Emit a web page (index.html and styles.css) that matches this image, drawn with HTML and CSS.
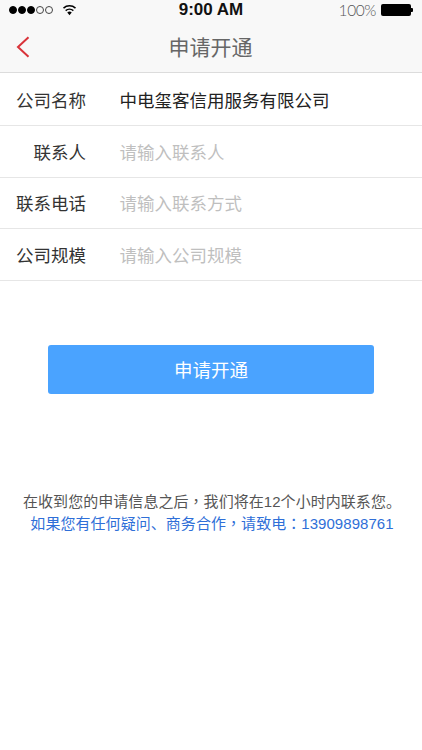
FILE: index.html
```html
<!DOCTYPE html>
<html lang="zh-CN">
<head>
<meta charset="utf-8">
<title>申请开通</title>
<link rel="stylesheet" href="styles.css">
</head>
<body>
<div class="top">
  <div class="status">
    <div class="status-left">
      <span class="dots"><i class="dot"></i><i class="dot"></i><i class="dot"></i><i class="dot off"></i><i class="dot off"></i></span>
      <svg class="wifi" width="15" height="12" viewBox="0 0 16 12"><path d="M8 11.5 5.6 8.6a3.7 3.7 0 0 1 4.8 0z" fill="#000"/><path d="M3.9 6.7a6.2 6.2 0 0 1 8.2 0M1.6 4a9.6 9.6 0 0 1 12.8 0" fill="none" stroke="#000" stroke-width="1.6"/></svg>
    </div>
    <div class="clock">9:00 AM</div>
    <div class="status-right">
      <span class="pct">100%</span>
      <span class="battery"><i class="cap"></i></span>
    </div>
  </div>
  <header class="nav">
    <svg class="back" width="14" height="22" viewBox="0 0 14 22"><path d="M12.5 1.2 2 11l10.5 9.8" fill="none" stroke="#d9333a" stroke-width="2"/></svg>
    <h1 class="title">申请开通</h1>
  </header>
</div>
<main class="form">
  <div class="row"><span class="label">公司名称</span><span class="value">中电玺客信用服务有限公司</span></div>
  <div class="row"><span class="label">联系人</span><span class="value ph">请输入联系人</span></div>
  <div class="row"><span class="label">联系电话</span><span class="value ph">请输入联系方式</span></div>
  <div class="row"><span class="label">公司规模</span><span class="value ph">请输入公司规模</span></div>
</main>
<div class="action"><button class="submit">申请开通</button></div>
<footer class="notes">
  <p class="note">在收到您的申请信息之后<span class="punct" lang="zh-TW">，</span>我们将在12个小时内联系您。</p>
  <p class="note link">如果您有任何疑问、商务合作<span class="punct" lang="zh-TW">，</span>请致电<span class="punct" lang="zh-TW">：</span>13909898761</p>
</footer>
</body>
</html>
```
FILE: styles.css
```css
* { box-sizing: border-box; margin: 0; padding: 0; }
html, body { width: 422px; height: 750px; overflow: hidden; background: #fff; }
body { font-family: "Liberation Sans", "Noto Sans CJK SC", sans-serif; color: #333; }
.top { background: #f8f8f8; border-bottom: 1px solid #dcdcdc; height: 73px; }
.status { height: 20px; display: flex; align-items: center; position: relative; padding: 0 9px 0 9px; justify-content: space-between; }
.status-left { display: flex; align-items: center; gap: 9px; }
.dots { display: flex; gap: 1px; }
.dot { width: 8px; height: 8px; border-radius: 50%; background: #000; border: 1px solid #000; }
.dot.off { background: transparent; border: 0.7px solid #444; }
.clock { font-size: 17px; font-weight: 700; color: #111; position: absolute; left: 0; right: 0; text-align: center; }
.status-right { display: flex; align-items: center; gap: 5px; }
.pct { font-size: 15.5px; color: #555; font-family: "Lato", sans-serif; font-weight: 300; letter-spacing: -0.4px; }
.battery { width: 30px; height: 12px; background: #000; border-radius: 2px; position: relative; display: block; margin-right: 2px; }
.cap { position: absolute; right: -2px; top: 4px; width: 2px; height: 4px; background: #000; border-radius: 0 1px 1px 0; }
.nav { height: 52px; display: flex; align-items: center; justify-content: center; position: relative; }
.back { position: absolute; left: 16px; top: 16px; }
.title { font-size: 21px; font-weight: 400; color: #666; padding-right: 1px; }
.form { padding-top: 1.4px; }
.row { height: 51.6px; border-bottom: 1px solid #e6e6e6; display: flex; align-items: center; font-size: 17.5px; }
.label { width: 86px; text-align: right; color: #333; flex: none; }
.value { margin-left: 33.5px; color: #222; }
.value.ph { color: #bfbfbf; }
.action { padding: 64.6px 48px 0; }
.submit { display: block; width: 100%; height: 49px; border: 0; border-radius: 3px; padding-bottom: 2px; background: #4aa3ff; color: #fff; font: 18.5px "Liberation Sans", "Noto Sans CJK SC", sans-serif; }
.notes { padding: 96px 0 0 2px; text-align: center; }
.note { font-size: 15px; line-height: 21px; color: #555; white-space: nowrap; letter-spacing: 0.05px; }
.punct { font-family: "Noto Sans CJK TC", sans-serif; }
.link { color: #2f6fd8; }
```
